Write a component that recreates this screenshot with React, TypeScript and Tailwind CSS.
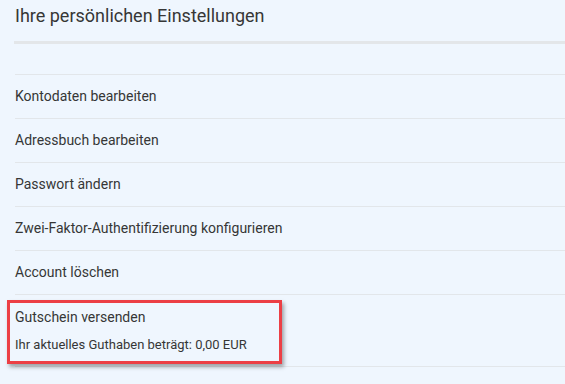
import React from "react";

const rows = [
  "Kontodaten bearbeiten",
  "Adressbuch bearbeiten",
  "Passwort ändern",
  "Zwei-Faktor-Authentifizierung konfigurieren",
  "Account löschen",
];

export default function App() {
  return (
    <div
      className="relative w-[565px] h-[384px] overflow-hidden bg-[#eff6fe] text-[#363636]"
      style={{ fontFamily: "Roboto, 'Liberation Sans', sans-serif" }}
    >
      <div className="pl-[14px]">
        <div className="h-[44px] border-b-[3px] border-[#e3e6e9] flex items-start pt-[4px] pl-[1px]">
          <h1 className="text-[18px] leading-[24px] font-normal">Ihre persönlichen Einstellungen</h1>
        </div>
        <div className="ml-[1px] mt-[30px] border-t border-[#e2e6ea]">
          {rows.map((r) => (
            <div key={r} className="h-[44px] border-b border-[#e2e6ea] flex items-center text-[14px]">
              {r}
            </div>
          ))}
          <div className="h-[72px] border-b border-[#e2e6ea] flex flex-col pt-[13px]">
            <div className="text-[14px] leading-[18px]">Gutschein versenden</div>
            <div className="text-[13px] leading-[18px] mt-[10px]">Ihr aktuelles Guthaben beträgt: 0,00 EUR</div>
          </div>
        </div>
      </div>
      <div className="absolute left-[7px] top-[300px] w-[275px] h-[64px] border-[3px] border-[#ec3f45] shadow-[2px_3px_4px_rgba(0,0,0,0.35)]" />
    </div>
  );
}
